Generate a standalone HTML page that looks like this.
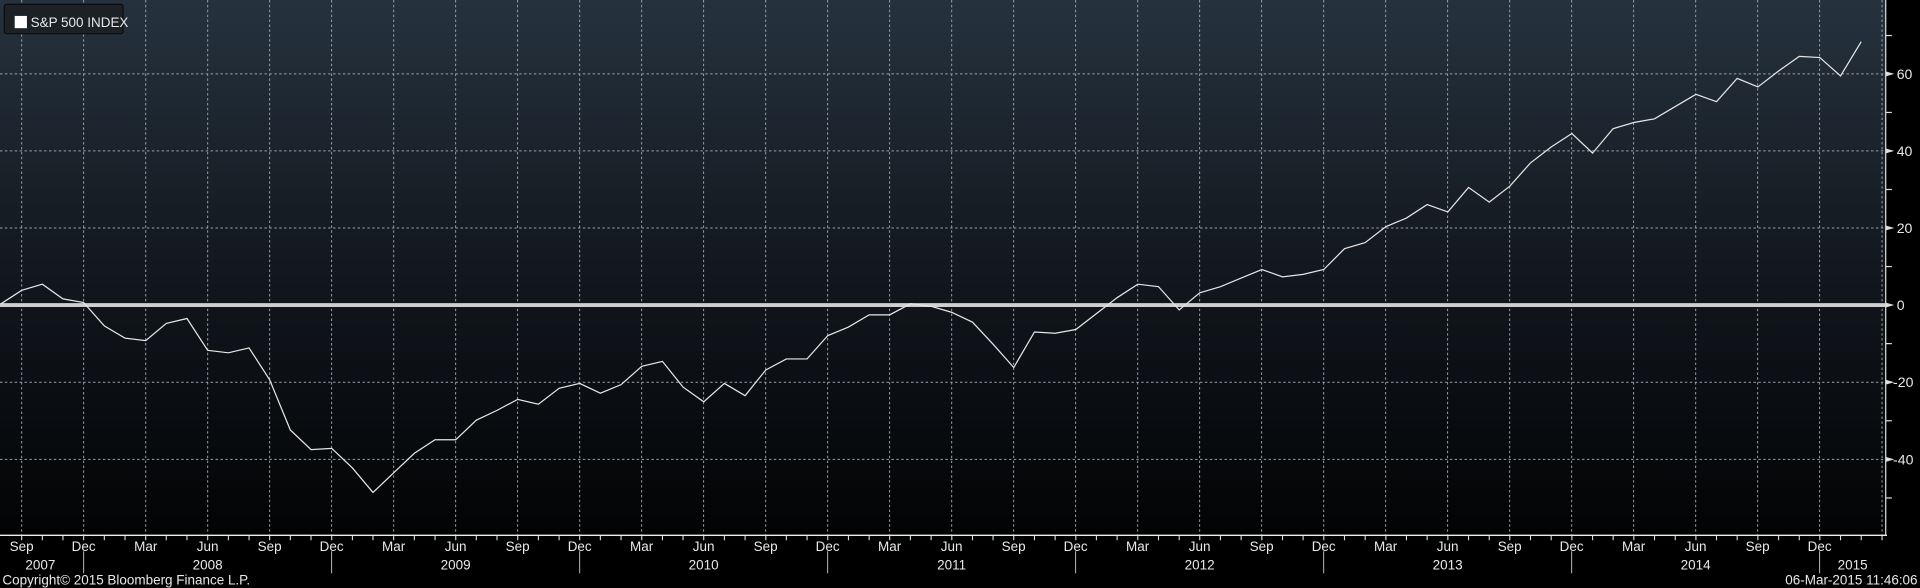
<!DOCTYPE html>
<html><head><meta charset="utf-8"><style>
html,body{margin:0;padding:0;background:#000;width:1920px;height:588px;overflow:hidden}
svg{display:block}
text{font-family:"Liberation Sans","DejaVu Sans",sans-serif;fill:#e8e8e8}
</style></head><body>
<svg width="1920" height="588" viewBox="0 0 1568 480" preserveAspectRatio="none">
<defs><linearGradient id="g" x1="0" y1="0" x2="0" y2="1">
<stop offset="0" stop-color="#25323e"/><stop offset="0.45" stop-color="#141a21"/><stop offset="1" stop-color="#020304"/></linearGradient></defs>
<rect x="0" y="0" width="1568" height="480" fill="#000"/>
<rect x="0" y="0" width="1540" height="437" fill="url(#g)"/>
<g stroke="#9aa0a6" stroke-width="0.8" stroke-dasharray="2,2" fill="none">
<line x1="0" y1="60.3" x2="1540" y2="60.3"/><line x1="0" y1="123.2" x2="1540" y2="123.2"/><line x1="0" y1="186.1" x2="1540" y2="186.1"/><line x1="0" y1="312" x2="1540" y2="312"/><line x1="0" y1="375" x2="1540" y2="375"/>
<path d="M17.7 0V437M68.3 0V437M119 0V437M169.6 0V437M220.2 0V437M270.8 0V437M321.5 0V437M372.1 0V437M422.7 0V437M473.4 0V437M524 0V437M574.6 0V437M625.3 0V437M675.9 0V437M726.5 0V437M777.2 0V437M827.8 0V437M878.4 0V437M929.1 0V437M979.7 0V437M1030.3 0V437M1081 0V437M1131.6 0V437M1182.2 0V437M1232.9 0V437M1283.5 0V437M1334.1 0V437M1384.8 0V437M1435.4 0V437M1486 0V437M1537 0V437"/>
</g>
<line x1="0" y1="249" x2="1540" y2="249" stroke="#cfcfcf" stroke-width="3.2"/>
<polyline fill="none" stroke="#e6e6e6" stroke-width="1" points="0.8,248 17.7,237 34.6,232 51.4,244 68.3,247 85.2,266 102.1,276 119,278 135.8,264 152.7,260 169.6,286 186.5,288 203.4,284 220.2,310 237.1,351 254,367 270.9,366 287.8,382 304.6,402 321.5,386 338.4,370 355.3,359 372.2,359 389,343 405.9,335 422.8,326 439.7,330 456.6,317 473.4,313 490.3,321 507.2,314 524.1,299 541,295 557.8,316 574.7,328 591.6,313 608.5,323 625.4,302 642.2,293 659.1,293 676,274 692.9,267 709.8,257 726.6,257 743.5,248 760.4,250 777.3,255 794.2,263 811,281 827.9,300 844.8,271 861.7,272 878.6,269 895.4,256 912.3,243 929.2,232 946.1,234 963,253 979.8,239 996.7,234 1013.6,227 1030.5,220 1047.4,226 1064.2,224 1081.1,220 1098,203 1114.9,198 1131.8,185 1148.6,178 1165.5,167 1182.4,173 1199.3,153 1216.2,165 1233,152 1249.9,133 1266.8,120 1283.7,109 1300.6,125 1317.4,105 1334.3,100 1351.2,97 1368.1,87 1385,77 1401.8,83 1418.7,64 1435.6,71 1452.5,58 1469.4,46 1486.2,47 1503.1,62 1520,34"/>
<line x1="1540" y1="0" x2="1540" y2="437" stroke="#ddd" stroke-width="1"/>
<g stroke="#ddd" stroke-width="1">
<line x1="1540" y1="29" x2="1545" y2="29"/><line x1="1540" y1="91.8" x2="1545" y2="91.8"/><line x1="1540" y1="154.7" x2="1545" y2="154.7"/><line x1="1540" y1="217.6" x2="1545" y2="217.6"/><line x1="1540" y1="280.5" x2="1545" y2="280.5"/><line x1="1540" y1="343.5" x2="1545" y2="343.5"/><line x1="1540" y1="406.5" x2="1545" y2="406.5"/>
</g>
<g fill="#ddd"><path d="M1540 58.3l7 2-7 2z"/><path d="M1540 121.2l7 2-7 2z"/><path d="M1540 184.1l7 2-7 2z"/><path d="M1540 247l7 2-7 2z"/><path d="M1540 310l7 2-7 2z"/><path d="M1540 373l7 2-7 2z"/></g>
<g font-size="11.5">
<text x="1549" y="64.3">60</text><text x="1549" y="127.2">40</text><text x="1549" y="190.1">20</text><text x="1549" y="253">0</text><text x="1546" y="316">-20</text><text x="1546" y="379">-40</text>
</g>
<line x1="0" y1="437" x2="1541" y2="437" stroke="#eee" stroke-width="1.2"/>
<path stroke="#ddd" stroke-width="0.9" d="M17.7 437v4M34.6 437v4M51.4 437v4M68.3 437v4M85.2 437v4M102.1 437v4M119 437v4M135.8 437v4M152.7 437v4M169.6 437v4M186.5 437v4M203.4 437v4M220.2 437v4M237.1 437v4M254 437v4M270.9 437v4M287.8 437v4M304.6 437v4M321.5 437v4M338.4 437v4M355.3 437v4M372.2 437v4M389 437v4M405.9 437v4M422.8 437v4M439.7 437v4M456.6 437v4M473.4 437v4M490.3 437v4M507.2 437v4M524.1 437v4M541 437v4M557.8 437v4M574.7 437v4M591.6 437v4M608.5 437v4M625.4 437v4M642.2 437v4M659.1 437v4M676 437v4M692.9 437v4M709.8 437v4M726.6 437v4M743.5 437v4M760.4 437v4M777.3 437v4M794.2 437v4M811 437v4M827.9 437v4M844.8 437v4M861.7 437v4M878.6 437v4M895.4 437v4M912.3 437v4M929.2 437v4M946.1 437v4M963 437v4M979.8 437v4M996.7 437v4M1013.6 437v4M1030.5 437v4M1047.4 437v4M1064.2 437v4M1081.1 437v4M1098 437v4M1114.9 437v4M1131.8 437v4M1148.6 437v4M1165.5 437v4M1182.4 437v4M1199.3 437v4M1216.2 437v4M1233 437v4M1249.9 437v4M1266.8 437v4M1283.7 437v4M1300.6 437v4M1317.4 437v4M1334.3 437v4M1351.2 437v4M1368.1 437v4M1385 437v4M1401.8 437v4M1418.7 437v4M1435.6 437v4M1452.5 437v4M1469.4 437v4M1486.2 437v4M1503.1 437v4M1520 437v4M1537 437v4"/>
<path stroke="#bbb" stroke-width="0.8" d="M68.3 450v18M270.8 450v18M473.4 450v18M675.9 450v18M878.4 450v18M1081 450v18M1283.5 450v18M1486 450v18"/>
<g font-size="11" text-anchor="middle">
<text x="17.7" y="450">Sep</text><text x="68.3" y="450">Dec</text><text x="119" y="450">Mar</text><text x="169.6" y="450">Jun</text><text x="220.2" y="450">Sep</text><text x="270.8" y="450">Dec</text><text x="321.5" y="450">Mar</text><text x="372.1" y="450">Jun</text><text x="422.7" y="450">Sep</text><text x="473.4" y="450">Dec</text><text x="524" y="450">Mar</text><text x="574.6" y="450">Jun</text><text x="625.3" y="450">Sep</text><text x="675.9" y="450">Dec</text><text x="726.5" y="450">Mar</text><text x="777.2" y="450">Jun</text><text x="827.8" y="450">Sep</text><text x="878.4" y="450">Dec</text><text x="929.1" y="450">Mar</text><text x="979.7" y="450">Jun</text><text x="1030.3" y="450">Sep</text><text x="1081" y="450">Dec</text><text x="1131.6" y="450">Mar</text><text x="1182.2" y="450">Jun</text><text x="1232.9" y="450">Sep</text><text x="1283.5" y="450">Dec</text><text x="1334.1" y="450">Mar</text><text x="1384.8" y="450">Jun</text><text x="1435.4" y="450">Sep</text><text x="1486" y="450">Dec</text>
<text x="33" y="465">2007</text><text x="169.6" y="465">2008</text><text x="372.1" y="465">2009</text><text x="574.6" y="465">2010</text><text x="777.2" y="465">2011</text><text x="979.7" y="465">2012</text><text x="1182.2" y="465">2013</text><text x="1384.8" y="465">2014</text><text x="1513" y="465">2015</text>
</g>
<text x="2" y="477" font-size="11">Copyright© 2015 Bloomberg Finance L.P.</text>
<text x="1566" y="477" font-size="11" text-anchor="end">06-Mar-2015 11:46:06</text>
<rect x="3.5" y="3.5" width="97" height="24" rx="2" fill="#1c2126" stroke="#0b0d0f" stroke-width="1"/>
<rect x="12" y="13" width="10" height="10" fill="#fff"/>
<text x="25" y="22" font-size="11" fill="#f2f2f2">S&amp;P 500 INDEX</text>
</svg>
</body></html>
